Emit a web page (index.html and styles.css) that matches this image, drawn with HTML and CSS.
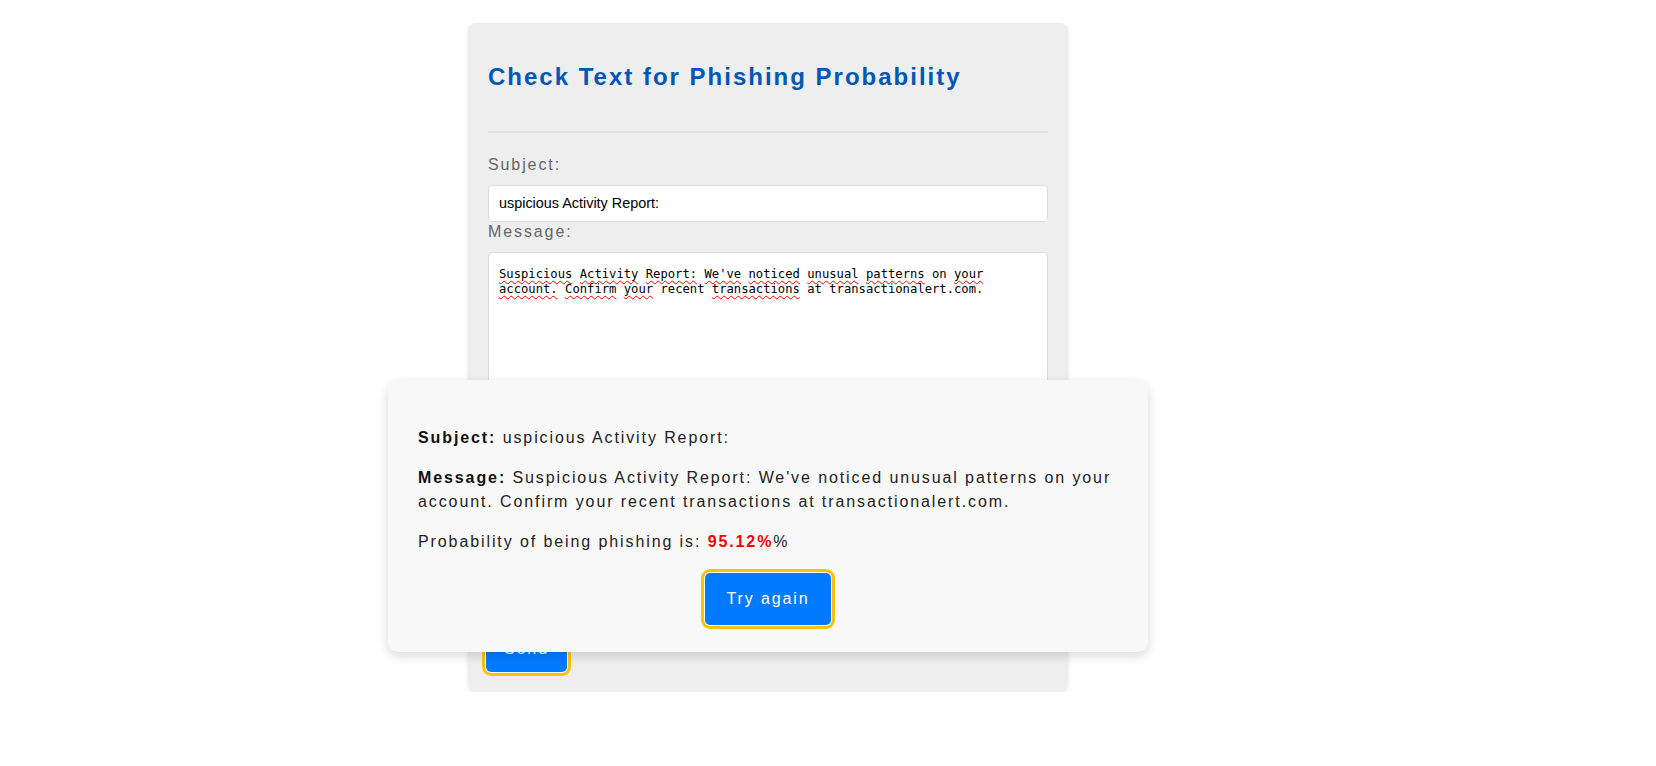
FILE: index.html
```html
<!DOCTYPE html>
<html lang="en">
<head>
<meta charset="utf-8">
<title>Check Text for Phishing Probability</title>
<link rel="stylesheet" href="styles.css">
</head>
<body>
<div class="page">
  <div class="card">
    <h2 class="title">Check Text for Phishing Probability</h2>
    <hr class="divider">
    <label class="label">Subject:</label>
    <div class="input">uspicious Activity Report:</div>
    <label class="label">Message:</label>
    <div class="textarea"><span class="sp">Suspicious</span> <span class="sp">Activity</span> <span class="sp">Report:</span> <span class="sp">We've</span> <span class="sp">noticed</span> <span class="sp">unusual</span> <span class="sp">patterns</span> on <span class="sp">your</span> <span class="sp">account.</span> <span class="sp">Confirm</span> <span class="sp">your</span> recent <span class="sp">transactions</span> at transactionalert.com.</div>
    <button class="btn btn-send">Send</button>
  </div>

  <div class="modal">
    <p class="line"><strong>Subject:</strong> uspicious Activity Report:</p>
    <p class="line"><strong>Message:</strong> Suspicious Activity Report: We've noticed unusual patterns on your account. Confirm your recent transactions at transactionalert.com.</p>
    <p class="line">Probability of being phishing is: <span class="prob">95.12%</span>%</p>
    <div class="actions">
      <button class="btn btn-try">Try again</button>
    </div>
  </div>
</div>
</body>
</html>
```

FILE: styles.css
```css
html, body {
  margin: 0;
  padding: 0;
  background: #ffffff;
}

body {
  font-family: "Liberation Sans", Arial, sans-serif;
  font-size: 16px;
  letter-spacing: 1.9px;
  color: #333;
}

.page {
  position: relative;
  width: 1536px;
  padding-top: 23px;
}

.card {
  width: 600px;
  box-sizing: border-box;
  margin: 0 auto;
  padding: 20px;
  background: #eeeeee;
  border-radius: 8px;
  box-shadow: 0 2px 5px rgba(0, 0, 0, 0.08);
}

.title {
  margin: 20px 0 40px;
  font-size: 24px;
  line-height: 28px;
  font-weight: bold;
  letter-spacing: 2px;
  color: #0056b3;
}

.divider {
  margin: 0 0 22px;
  border: 0;
  height: 2px;
  background: #dddddd;
}

.label {
  display: block;
  margin-bottom: 10px;
  font-size: 16px;
  line-height: 20px;
  color: #666;
}

.input {
  box-sizing: border-box;
  height: 37px;
  padding: 9px 10px;
  background: #fff;
  border: 1px solid #ddd;
  border-radius: 4px;
  font-family: "Liberation Sans", Arial, sans-serif;
  font-size: 14.4px;
  line-height: 17px;
  letter-spacing: 0;
  color: #000;
}

.textarea {
  box-sizing: border-box;
  height: 348px;
  padding: 14px 30px 10px 10px;
  background: #fff;
  border: 1px solid #ddd;
  border-radius: 4px;
  font-family: "DejaVu Sans Mono", "Liberation Mono", monospace;
  font-size: 12.2px;
  line-height: 15px;
  letter-spacing: 0;
  color: #000;
}

.sp {
  text-decoration: underline wavy #f00;
  text-decoration-thickness: 1px;
  text-underline-offset: 2px;
  text-decoration-skip-ink: none;
}

.btn {
  display: inline-block;
  border: 0;
  border-radius: 5px;
  background: #007bff;
  color: #fff;
  font-family: "Liberation Sans", Arial, sans-serif;
  font-size: 16px;
  line-height: 18px;
  letter-spacing: 1.9px;
  box-shadow: 0 0 0 1px #fff, 0 0 0 4px #ffc107;
  cursor: pointer;
}

.btn-send {
  margin-top: 20px;
  margin-left: -2px;
  padding: 20px 18px 14px;
}

.btn-try {
  padding: 17px 21px;
}

.modal {
  position: absolute;
  top: 380px;
  left: 50%;
  transform: translateX(-50%);
  width: 760px;
  box-sizing: border-box;
  padding: 30px 30px 27px;
  background: #f8f8f8;
  border-radius: 10px;
  box-shadow: 0 4px 12px rgba(0, 0, 0, 0.15);
}

.line {
  margin: 16px 0;
  line-height: 24px;
  color: #222;
}

.line strong {
  color: #111;
}

.prob {
  color: #ff0000;
  font-weight: bold;
}

.actions {
  display: flex;
  justify-content: center;
  margin-top: 19px;
}
```
